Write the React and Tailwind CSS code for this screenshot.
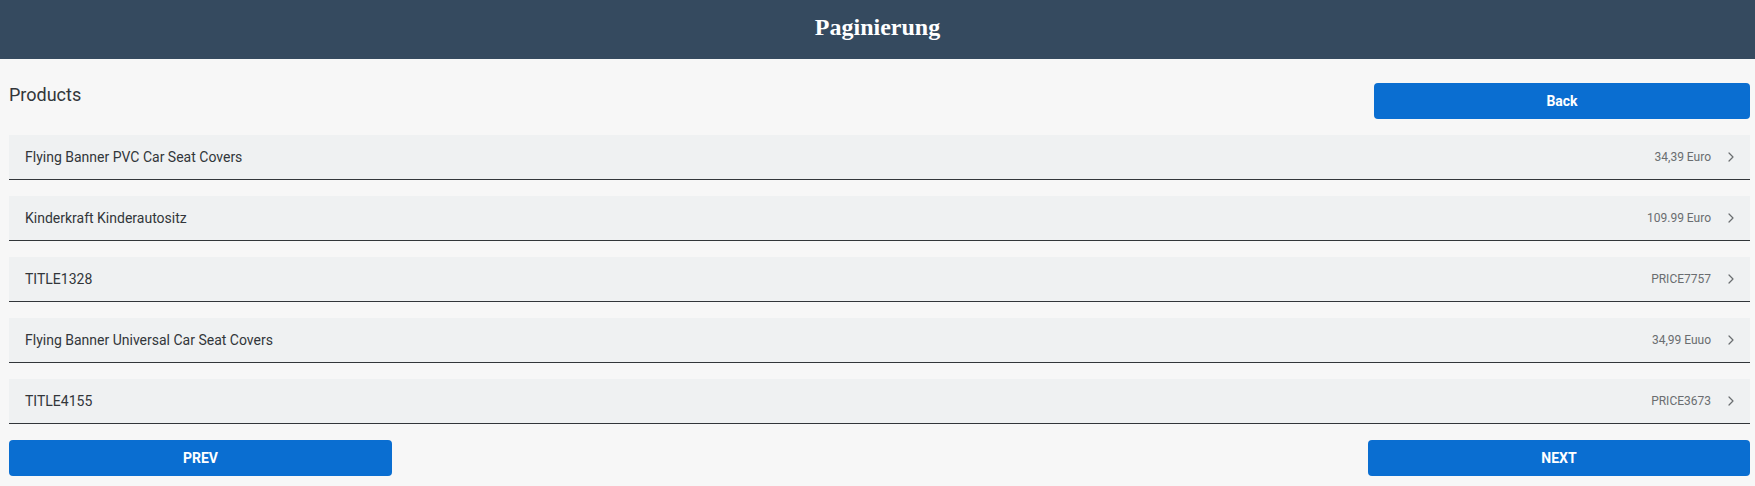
import React from "react";

const rows = [
  { title: "Flying Banner PVC Car Seat Covers", price: "34,39 Euro" },
  { title: "Kinderkraft Kinderautositz", price: "109.99 Euro" },
  { title: "TITLE1328", price: "PRICE7757" },
  { title: "Flying Banner Universal Car Seat Covers", price: "34,99 Euuo" },
  { title: "TITLE4155", price: "PRICE3673" },
];

function Chevron() {
  return (
    <svg width="6" height="10" viewBox="0 0 6 10" className="shrink-0">
      <path d="M1 1 L5 5 L1 9" fill="none" stroke="#6a6d70" strokeWidth="1.2" strokeLinecap="round" strokeLinejoin="round" />
    </svg>
  );
}

export default function App() {
  return (
    <div className="min-h-[486px] bg-[#f7f7f7] font-['Roboto',Arial,sans-serif] text-[#32363a]">
      <header className="h-[59px] bg-[#354a5f] flex items-center justify-center pb-[6px]">
        <h1 className="font-['Liberation_Serif','Times_New_Roman',serif] font-bold text-[24px] text-white leading-none">
          Paginierung
        </h1>
      </header>
      <main className="pl-[9px] pr-[5px] pt-6 flex flex-col gap-4">
        <div className="flex items-start justify-between">
          <div className="text-[18px] leading-6 text-[#32363a]">Products</div>
          <button className="w-[376px] h-9 rounded bg-[#0a6ed1] text-white text-[14px] font-bold">
            Back
          </button>
        </div>
        {rows.map((r, i) => (
          <div
            key={i}
            className="h-[45px] bg-[#eff1f2] border-b border-[#32363a] flex items-center pl-4 pr-4"
          >
            <span className="text-[14px] text-[#32363a] flex-1">{r.title}</span>
            <span className="text-[12px] text-[#6a6d70] mr-[17px]">{r.price}</span>
            <Chevron />
          </div>
        ))}
        <div className="flex justify-between">
          <button className="w-[383px] h-9 rounded bg-[#0a6ed1] text-white text-[14px] font-bold">
            PREV
          </button>
          <button className="w-[382px] h-9 rounded bg-[#0a6ed1] text-white text-[14px] font-bold">
            NEXT
          </button>
        </div>
      </main>
    </div>
  );
}
